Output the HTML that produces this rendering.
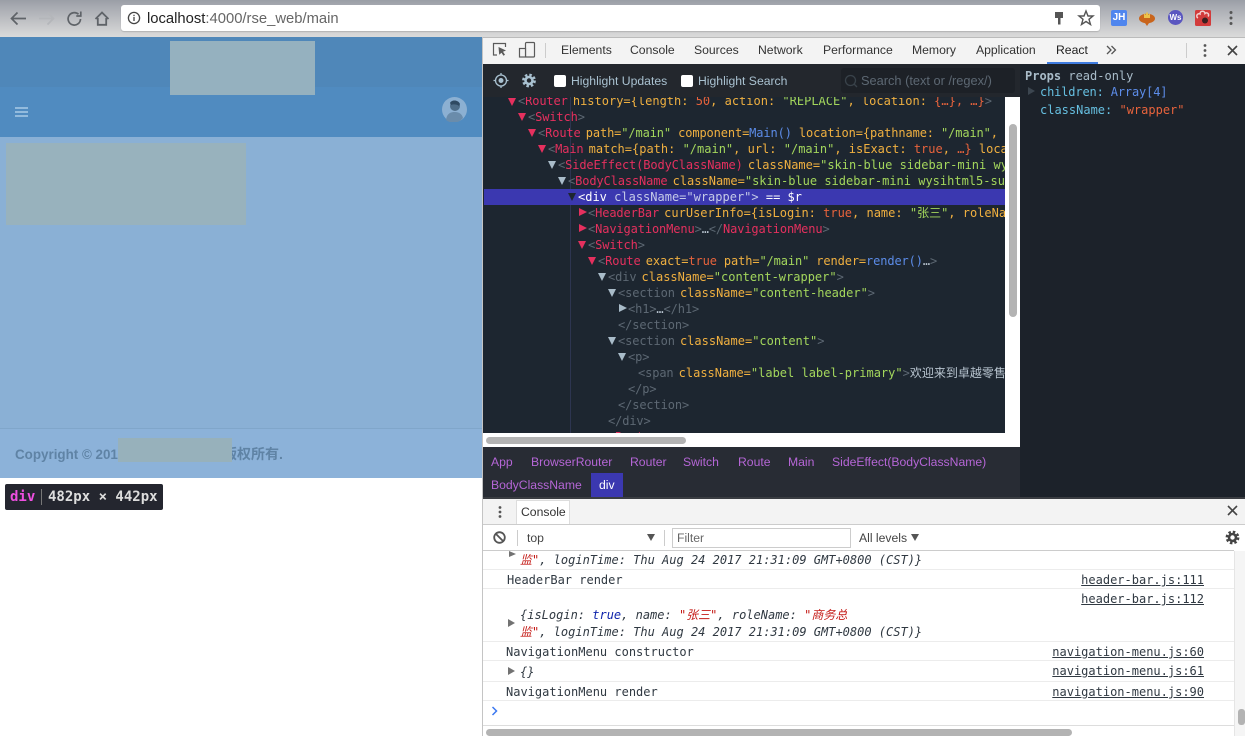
<!DOCTYPE html>
<html><head><meta charset="utf-8"><title>DevTools</title>
<style>
html,body{margin:0;padding:0;width:1245px;height:736px;overflow:hidden;background:#fff;font-family:"Liberation Sans","Noto Sans CJK SC",sans-serif}
.a{position:absolute}
.ui{position:absolute;font-size:12.2px;line-height:16px;color:#333;white-space:nowrap}
.m{font-family:"DejaVu Sans Mono","Liberation Mono","Noto Sans CJK SC",monospace;font-size:12px;line-height:16px;white-space:pre;position:absolute}
#tree .m{color:#5d6873;letter-spacing:-.12px}
#tree .z{letter-spacing:0}
.t{color:#e5305e}.k{color:#f0b040}.s{color:#a3d65c}.f{color:#5c8ce8}.o{color:#e8633c}.w{color:#b8c4cf}.g{color:#5d6873}
.sp{margin-left:-2px}
.tri{position:absolute;width:0;height:0}
.d{border-left:4.5px solid transparent;border-right:4.5px solid transparent;border-top:8px solid #e5305e}
.r{border-top:4.5px solid transparent;border-bottom:4.5px solid transparent;border-left:8px solid #e5305e}
.dg{border-left:4.5px solid transparent;border-right:4.5px solid transparent;border-top:8px solid #a9bcc9}
.rg{border-top:4.5px solid transparent;border-bottom:4.5px solid transparent;border-left:8px solid #a9bcc9}
.crumb{position:absolute;font-size:12.2px;line-height:16px;color:#b566d6;white-space:nowrap}
.line{position:absolute;left:483px;width:751px;height:1px;background:#ececec}
.c{color:#303942}.i{font-style:italic}.red{color:#c41a16}.blue{color:#0d22aa}
.lnk{position:absolute;right:41px;text-decoration:underline;color:#303942;font-family:"DejaVu Sans Mono",monospace;font-size:12px;line-height:16px;white-space:pre}
</style></head><body>

<!-- browser chrome -->
<div class="a" style="left:0;top:0;width:1245px;height:37px;background:linear-gradient(#9a9ea6 0,#a6a9b0 6px,#d9d9d9 36px)"></div>
<svg class="a" style="left:8px;top:8px" width="110" height="22" fill="none" stroke-width="1.7">
<path d="M18 10.500H4M9.500 4.500 3.500 10.500l6 6" stroke="#5f6368"/>
<path d="M31 10.500H45M39.500 4.500l6 6-6 6" stroke="#b4b6ba"/>
<path d="M70.500 6.300a6.200 6.200 0 1 0 2 4.700" stroke="#5f6368"/><path d="M72.800 3.500v4.500h-4.500" stroke="#5f6368"/>
<path d="M87.500 11 94 4.500l6.500 6.500M89.800 10v6.800h8.400V10" stroke="#5f6368" stroke-width="1.800"/>
</svg>
<div class="a" style="left:121px;top:5px;width:979px;height:26px;background:#fff;border-radius:3px;box-shadow:0 1px 1px rgba(0,0,0,.15)"></div>
<svg class="a" style="left:127px;top:11px" width="14" height="14" fill="none"><circle cx="7" cy="7" r="5.600" stroke="#444" stroke-width="1.300"/><path d="M7 6v4M7 3.800v1.300" stroke="#444" stroke-width="1.300"/></svg>
<div class="a" style="left:147px;top:10px;font-size:14.8px;line-height:18px;color:#666;white-space:nowrap"><span style="color:#222">localhost</span>:4000/rse_web/main</div>
<svg class="a" style="left:1050px;top:9px" width="18" height="18"><path d="M5 3h8v6H10.500v6.500H8V9H5z" fill="#555"/></svg>
<svg class="a" style="left:1077px;top:9px" width="18" height="18" fill="none"><path d="M9 2l2 5h5l-4 3.300 1.500 5.200L9 12.500 4.500 15.500 6 10.300 2 7h5z" stroke="#555" stroke-width="1.400"/></svg>
<div class="a" style="left:1111px;top:10px;width:16px;height:16px;background:#4f86ee;border-radius:2px;color:#fff;font:bold 10px/16px 'Liberation Sans',sans-serif;text-align:center">JH</div>
<svg class="a" style="left:1138px;top:8px" width="18" height="19"><ellipse cx="9" cy="10.500" rx="8" ry="4.800" fill="#c9651c"/><path d="M6 5l1.500 2L9 3.500 10.500 7 12 5v5H6z" fill="#ecc24a"/><path d="M7 15h4l-2 3z" fill="#c9651c"/></svg>
<div class="a" style="left:1168px;top:10px;width:15px;height:15px;background:#5a56c0;border-radius:50%;color:#fff;font:bold 8px/15px 'Liberation Sans',sans-serif;text-align:center">Ws</div>
<svg class="a" style="left:1195px;top:10px" width="16" height="16"><rect width="16" height="16" rx="1.500" fill="#d23b3b"/><path d="M3 8a2 2 0 1 1 2-4 2.500 2.500 0 0 1 5-.5 2 2 0 1 1 3 3" fill="none" stroke="#f3d0d0" stroke-width="1.500"/><circle cx="10" cy="10.500" r="3" fill="#3a2020"/></svg>
<svg class="a" style="left:1228px;top:10px" width="6" height="16" fill="#555"><circle cx="3" cy="2.500" r="1.500"/><circle cx="3" cy="8" r="1.500"/><circle cx="3" cy="13.500" r="1.500"/></svg>

<!-- page -->
<div class="a" style="left:0;top:37px;width:482px;height:50px;background:#4f87b9"></div>
<div class="a" style="left:0;top:87px;width:482px;height:50px;background:#508bc0"></div>
<div class="a" style="left:0;top:137px;width:482px;height:292px;background:#8ab0d5"></div>
<div class="a" style="left:0;top:428px;width:482px;height:50px;background:#8cb2d9;border-top:1px solid #80a6ca;box-sizing:border-box"></div>
<div class="a" style="left:170px;top:41px;width:145px;height:54px;background:#95b1bf"></div>
<div class="a" style="left:6px;top:143px;width:240px;height:82px;background:#98b2bd"></div>
<div class="a" style="left:15px;top:446px;font:bold 13.400px/18px 'Liberation Sans',sans-serif;color:#5f83a5;white-space:nowrap">Copyright © 2017</div>
<div class="a" style="left:223px;top:445px;font:bold 14px/18px 'Liberation Sans','Noto Sans CJK SC',sans-serif;color:#5f83a5;white-space:nowrap">版权所有.</div>
<div class="a" style="left:118px;top:438px;width:114px;height:24px;background:#97b1bb"></div>
<div class="a" style="left:15px;top:107px;width:13px;height:2px;background:#93bbdd;box-shadow:0 4px 0 #93bbdd,0 8px 0 #93bbdd"></div>
<svg class="a" style="left:442px;top:97px" width="25" height="25"><circle cx="12.500" cy="12.500" r="12.500" fill="#8cb0d2"/><circle cx="13" cy="9" r="5" fill="#4e6d88"/><path d="M8 6c1-3 8-4 10 1l-1 2c-2-2-6-2-8-1z" fill="#2f4a62"/><path d="M4 23c1-7 5-8 9-8s7 2 8 6a12 12 0 0 1-17 2z" fill="#6a8cab"/></svg>
<div class="a" style="left:5px;top:484px;width:158px;height:26px;background:#24262f;border-radius:2px"></div>
<div class="m" style="left:10px;top:489px;font-size:14px;font-weight:bold;color:#ddd"><span style="color:#ee4fe0">div</span></div>
<div class="a" style="left:41px;top:489px;width:1px;height:16px;background:#777"></div>
<div class="m" style="left:48px;top:489px;font-size:14px;font-weight:bold;color:#ddd">482px × 442px</div>

<!-- devtools top -->
<div class="a" style="left:482px;top:37px;width:1px;height:699px;background:#c4c4c4"></div>
<div class="a" style="left:483px;top:37px;width:762px;height:27px;background:#f3f3f3;border-top:1px solid #bbb;box-sizing:border-box"></div>
<svg class="a" style="left:491px;top:41px" width="46" height="18" fill="none" stroke="#5a5a5a" stroke-width="1.200">
<path d="M6 14H2.500V2.500h12V6"/><path d="M7.500 6l7.500 3.500-3 1.200 2 3-1.500 1-2-3-2.300 2z" fill="#5a5a5a" stroke="none"/>
<rect x="34.500" y="1.500" width="9" height="14.500" rx="1"/><rect x="28.500" y="7.500" width="6" height="8.500" fill="#f3f3f3"/></svg>
<div class="a" style="left:545px;top:43px;width:1px;height:15px;background:#ccc"></div>
<div class="ui" style="left:561px;top:42px">Elements</div>
<div class="ui" style="left:630px;top:42px">Console</div>
<div class="ui" style="left:694px;top:42px">Sources</div>
<div class="ui" style="left:758px;top:42px">Network</div>
<div class="ui" style="left:823px;top:42px">Performance</div>
<div class="ui" style="left:912px;top:42px">Memory</div>
<div class="ui" style="left:976px;top:42px">Application</div>
<div class="ui" style="left:1056px;top:42px;color:#222">React</div>
<div class="a" style="left:1047px;top:62px;width:51px;height:2px;background:#3f7ce0"></div>
<svg class="a" style="left:1106px;top:45px" width="11" height="10" fill="none" stroke="#555" stroke-width="1.300"><path d="M1 1l4 4-4 4M5.500 1l4 4-4 4"/></svg>
<div class="a" style="left:1186px;top:43px;width:1px;height:15px;background:#ccc"></div>
<svg class="a" style="left:1202px;top:43px" width="6" height="15" fill="#555"><circle cx="3" cy="2.500" r="1.400"/><circle cx="3" cy="7.500" r="1.400"/><circle cx="3" cy="12.500" r="1.400"/></svg>
<svg class="a" style="left:1226px;top:44px" width="13" height="13" stroke="#444" stroke-width="1.600"><path d="M2 2l9 9M11 2l-9 9"/></svg>

<!-- react toolbar -->
<div class="a" style="left:483px;top:64px;width:537px;height:33px;background:#23272d"></div>
<svg class="a" style="left:492px;top:72px" width="46" height="17" fill="none">
<circle cx="9" cy="8.500" r="5.500" stroke="#a9c1d0" stroke-width="1.300"/><circle cx="9" cy="8.500" r="2.500" fill="#a9c1d0"/><path d="M9 1v2.500M9 13.500V16M1.500 8.500H4M14 8.500h2.500" stroke="#a9c1d0" stroke-width="1.300"/>
<circle cx="37" cy="8.500" r="5.700" stroke="#a9c1d0" stroke-width="2.400" stroke-dasharray="2.500 2"/><circle cx="37" cy="8.500" r="3.500" stroke="#a9c1d0" stroke-width="2.600"/></svg>
<div class="a" style="left:554px;top:75px;width:12px;height:12px;background:#fff;border-radius:2px"></div>
<div class="ui" style="left:571px;top:73px;color:#a9c1d0">Highlight Updates</div>
<div class="a" style="left:681px;top:75px;width:12px;height:12px;background:#fff;border-radius:2px"></div>
<div class="ui" style="left:698px;top:73px;color:#a9c1d0">Highlight Search</div>
<div class="a" style="left:841px;top:68px;width:174px;height:25px;background:#1d2127;border-radius:3px"></div>
<svg class="a" style="left:844px;top:74px" width="14" height="14" fill="none" stroke="#39424a" stroke-width="1.300"><circle cx="6.500" cy="6.500" r="5"/><path d="M10 10l3 3"/></svg>
<div class="ui" style="left:861px;top:73px;color:#5d6873;font-size:12.800px">Search (text or /regex/)</div>

<!-- tree -->
<div id="tree" class="a" style="left:483px;top:97px;width:522px;height:336px;background:#1d2630;overflow:hidden">
<div class="a" style="left:87px;top:0;width:1px;height:336px;background:#2d3550"></div>
<div class="a" style="left:1px;top:92px;width:521px;height:16px;background:#3b38b0"></div>
<div style="position:absolute;left:-483px;top:-97px;width:1005px;height:433px">
<div class="tri d" style="left:508px;top:98px"></div><div class="m" style="left:518px;top:93px">&lt;<span class="t">Router</span> <span class="z"><span class="k sp">history={</span><span class="k">length:</span> <span class="o">50</span><span class="k">, action:</span> <span class="s">"REPLACE"</span><span class="k">, location:</span> <span class="o">{…}, …}</span>&gt;</span></div>
<div class="tri d" style="left:518px;top:113px"></div><div class="m" style="left:528px;top:109px">&lt;<span class="t">Switch</span>&gt;</div>
<div class="tri d" style="left:528px;top:129px"></div><div class="m" style="left:538px;top:125px">&lt;<span class="t">Route</span> <span class="k sp">path=</span><span class="s">"/main"</span> <span class="k">component=</span><span class="f">Main()</span> <span class="k">location={pathname:</span> <span class="s">"/main"</span><span class="k">,</span></div>
<div class="tri d" style="left:538px;top:145px"></div><div class="m" style="left:548px;top:141px">&lt;<span class="t">Main</span> <span class="z"><span class="k sp">match={path:</span> <span class="s">"/main"</span><span class="k">, url:</span> <span class="s">"/main"</span><span class="k">, isExact:</span> <span class="o">true</span><span class="k">,</span> <span class="o">…}</span> <span class="k">location</span></span></div>
<div class="tri dg" style="left:548px;top:161px"></div><div class="m" style="left:558px;top:157px">&lt;<span class="t">SideEffect(BodyClassName)</span> <span class="z"><span class="k sp">className=</span><span class="s">"skin-blue sidebar-mini wysihtml5-supported"</span></span></div>
<div class="tri dg" style="left:558px;top:177px"></div><div class="m" style="left:568px;top:173px">&lt;<span class="t">BodyClassName</span> <span class="z"><span class="k sp">className=</span><span class="s">"skin-blue sidebar-mini wysihtml5-supported"</span></span></div>
<div class="tri" style="left:568px;top:193px;border-left:4.500px solid transparent;border-right:4.500px solid transparent;border-top:8px solid #1d2630"></div><div class="m z" style="left:578px;top:189px;color:#c5cbe8"><span style="color:#fff">&lt;div</span> <span style="color:#c5cbe8">className="wrapper"&gt;</span> <span style="color:#fff">== $r</span></div>
<div class="tri r" style="left:579px;top:208px"></div><div class="m" style="left:588px;top:205px">&lt;<span class="t">HeaderBar</span> <span class="z"><span class="k sp">curUserInfo={isLogin:</span> <span class="o">true</span><span class="k">, name:</span> <span class="s">"张三"</span><span class="k">, roleName:</span></span></div>
<div class="tri r" style="left:579px;top:224px"></div><div class="m" style="left:588px;top:221px">&lt;<span class="t">NavigationMenu</span>&gt;<span class="w">…</span>&lt;/<span class="t">NavigationMenu</span>&gt;</div>
<div class="tri d" style="left:578px;top:241px"></div><div class="m" style="left:588px;top:237px">&lt;<span class="t">Switch</span>&gt;</div>
<div class="tri d" style="left:588px;top:257px"></div><div class="m" style="left:598px;top:253px">&lt;<span class="t">Route</span> <span class="k sp">exact=</span><span class="o">true</span> <span class="k">path=</span><span class="s">"/main"</span> <span class="k">render=</span><span class="f">render()</span><span class="w">…</span>&gt;</div>
<div class="tri dg" style="left:598px;top:273px"></div><div class="m" style="left:608px;top:269px">&lt;div <span class="z"><span class="k sp">className=</span><span class="s">"content-wrapper"</span>&gt;</span></div>
<div class="tri dg" style="left:608px;top:289px"></div><div class="m" style="left:618px;top:285px">&lt;section <span class="z"><span class="k sp">className=</span><span class="s">"content-header"</span>&gt;</span></div>
<div class="tri rg" style="left:619px;top:304px"></div><div class="m" style="left:628px;top:301px">&lt;h1&gt;<span class="w">…</span>&lt;/h1&gt;</div>
<div class="m" style="left:618px;top:317px">&lt;/section&gt;</div>
<div class="tri dg" style="left:608px;top:337px"></div><div class="m" style="left:618px;top:333px">&lt;section <span class="z"><span class="k sp">className=</span><span class="s">"content"</span>&gt;</span></div>
<div class="tri dg" style="left:618px;top:353px"></div><div class="m" style="left:628px;top:349px">&lt;p&gt;</div>
<div class="m" style="left:638px;top:365px">&lt;span <span class="z"><span class="k sp">className=</span><span class="s">"label label-primary"</span>&gt;<span class="w">欢迎来到卓越零售</span></span></div>
<div class="m" style="left:628px;top:381px">&lt;/p&gt;</div>
<div class="m" style="left:618px;top:397px">&lt;/section&gt;</div>
<div class="m" style="left:608px;top:413px">&lt;/div&gt;</div>
<div class="m" style="left:608px;top:429px">&lt;<span class="t">Route</span></div>
</div>
</div>
<div class="a" style="left:1005px;top:97px;width:15px;height:350px;background:#fff"></div>
<div class="a" style="left:1009px;top:124px;width:8px;height:193px;background:#b3b3b3;border-radius:4px"></div>
<div class="a" style="left:483px;top:433px;width:537px;height:14px;background:#fff"></div>
<div class="a" style="left:486px;top:437px;width:200px;height:7px;background:#b3b3b3;border-radius:4px"></div>

<!-- breadcrumbs -->
<div class="a" style="left:483px;top:447px;width:537px;height:50px;background:#282c34"></div>
<div class="a" style="left:591px;top:473px;width:32px;height:24px;background:#3b38b0"></div>
<div class="crumb" style="left:491px;top:454px">App</div>
<div class="crumb" style="left:531px;top:454px">BrowserRouter</div>
<div class="crumb" style="left:630px;top:454px">Router</div>
<div class="crumb" style="left:683px;top:454px">Switch</div>
<div class="crumb" style="left:738px;top:454px">Route</div>
<div class="crumb" style="left:788px;top:454px">Main</div>
<div class="crumb" style="left:832px;top:454px">SideEffect(BodyClassName)</div>
<div class="crumb" style="left:491px;top:477px">BodyClassName</div>
<div class="crumb" style="left:599px;top:477px;color:#fff">div</div>

<!-- props -->
<div class="a" style="left:1020px;top:64px;width:225px;height:433px;background:#1c222a"></div>
<div class="m" style="left:1025px;top:68px;color:#a9bcc9"><b>Props</b> read-only</div>
<div class="tri" style="left:1028px;top:87px;border-top:4.500px solid transparent;border-bottom:4.500px solid transparent;border-left:7px solid #3c4650"></div>
<div class="m" style="left:1040px;top:84px;color:#66bfe0;letter-spacing:-.15px">children: <span style="color:#5c8ce8">Array[4]</span></div>
<div class="m" style="left:1040px;top:102px;color:#66bfe0">className: <span style="color:#e8633c">"wrapper"</span></div>

<!-- console -->
<div class="a" style="left:483px;top:497px;width:762px;height:239px;background:#fff"></div>
<div class="a" style="left:483px;top:497px;width:762px;height:2px;background:#3a3d42"></div>
<div class="a" style="left:483px;top:499px;width:762px;height:25px;background:#f3f3f3;border-bottom:1px solid #ccc"></div>
<div class="a" style="left:516px;top:500px;width:54px;height:24px;background:#fff;border:1px solid #ddd;border-bottom:0;box-sizing:border-box"></div>
<div class="ui" style="left:521px;top:504px">Console</div>
<svg class="a" style="left:497px;top:505px" width="6" height="14" fill="#555"><circle cx="3" cy="2.500" r="1.400"/><circle cx="3" cy="7" r="1.400"/><circle cx="3" cy="11.500" r="1.400"/></svg>
<svg class="a" style="left:1226px;top:504px" width="13" height="13" stroke="#444" stroke-width="1.600"><path d="M2 2l9 9M11 2l-9 9"/></svg>
<div class="a" style="left:483px;top:550px;width:751px;height:1px;background:#ccc"></div>
<svg class="a" style="left:493px;top:531px" width="14" height="14" fill="none" stroke="#555" stroke-width="1.800"><circle cx="6.500" cy="6.500" r="5.300"/><path d="M3 3l7 7"/></svg>
<div class="a" style="left:517px;top:530px;width:1px;height:16px;background:#ccc"></div>
<div class="ui" style="left:527px;top:530px;color:#444">top</div>
<div class="tri" style="left:647px;top:534px;border-left:4px solid transparent;border-right:4px solid transparent;border-top:7px solid #555"></div>
<div class="a" style="left:664px;top:530px;width:1px;height:16px;background:#ccc"></div>
<div class="a" style="left:672px;top:528px;width:179px;height:20px;border:1px solid #ccc;box-sizing:border-box"></div>
<div class="ui" style="left:677px;top:530px;color:#666">Filter</div>
<div class="ui" style="left:859px;top:530px;color:#444">All levels</div>
<div class="tri" style="left:911px;top:534px;border-left:4px solid transparent;border-right:4px solid transparent;border-top:7px solid #555"></div>
<svg class="a" style="left:1225px;top:530px" width="15" height="15" fill="none" stroke="#444"><circle cx="7.500" cy="7.500" r="5.700" stroke-width="2.400" stroke-dasharray="2.500 2"/><circle cx="7.500" cy="7.500" r="3.500" stroke-width="2.600"/></svg>

<div class="line" style="top:569px"></div><div class="line" style="top:588px"></div>
<div class="line" style="top:641px"></div><div class="line" style="top:660px"></div>
<div class="line" style="top:681px"></div><div class="line" style="top:700px"></div>
<div class="line" style="top:725px;background:#ddd"></div>

<div class="tri" style="left:509px;top:551px;border-top:3px solid transparent;border-bottom:3px solid transparent;border-left:7px solid #727272"></div>
<div class="m i c" style="left:520px;top:552px"><span class="red">监"</span>, loginTime: Thu Aug 24 2017 21:31:09 GMT+0800 (CST)}</div>
<div class="m c" style="left:507px;top:572px">HeaderBar render</div>
<div class="lnk" style="top:572px">header-bar.js:111</div>
<div class="lnk" style="top:591px">header-bar.js:112</div>
<div class="tri" style="left:508px;top:619px;border-top:4.500px solid transparent;border-bottom:4.500px solid transparent;border-left:7px solid #727272"></div>
<div class="m i c" style="left:520px;top:607px">{isLogin: <span class="blue">true</span>, name: <span class="red">"张三"</span>, roleName: <span class="red">"商务总</span></div>
<div class="m i c" style="left:520px;top:624px"><span class="red">监"</span>, loginTime: Thu Aug 24 2017 21:31:09 GMT+0800 (CST)}</div>
<div class="m c" style="left:506px;top:644px">NavigationMenu constructor</div>
<div class="lnk" style="top:644px">navigation-menu.js:60</div>
<div class="tri" style="left:508px;top:667px;border-top:4.500px solid transparent;border-bottom:4.500px solid transparent;border-left:7px solid #727272"></div>
<div class="m i c" style="left:520px;top:664px">{}</div>
<div class="lnk" style="top:663px">navigation-menu.js:61</div>
<div class="m c" style="left:506px;top:684px">NavigationMenu render</div>
<div class="lnk" style="top:684px">navigation-menu.js:90</div>
<svg class="a" style="left:491px;top:706px" width="8" height="10" fill="none" stroke="#3b78f0" stroke-width="1.500"><path d="M1.500 1l4 4-4 4"/></svg>

<div class="a" style="left:1234px;top:551px;width:11px;height:185px;background:#f5f5f5;border-left:1px solid #e5e5e5;box-sizing:border-box"></div>
<div class="a" style="left:1238px;top:709px;width:7px;height:16px;background:#b3b3b3;border-radius:3px"></div>
<div class="a" style="left:486px;top:729px;width:586px;height:7px;background:#b3b3b3;border-radius:4px"></div>
</body></html>
